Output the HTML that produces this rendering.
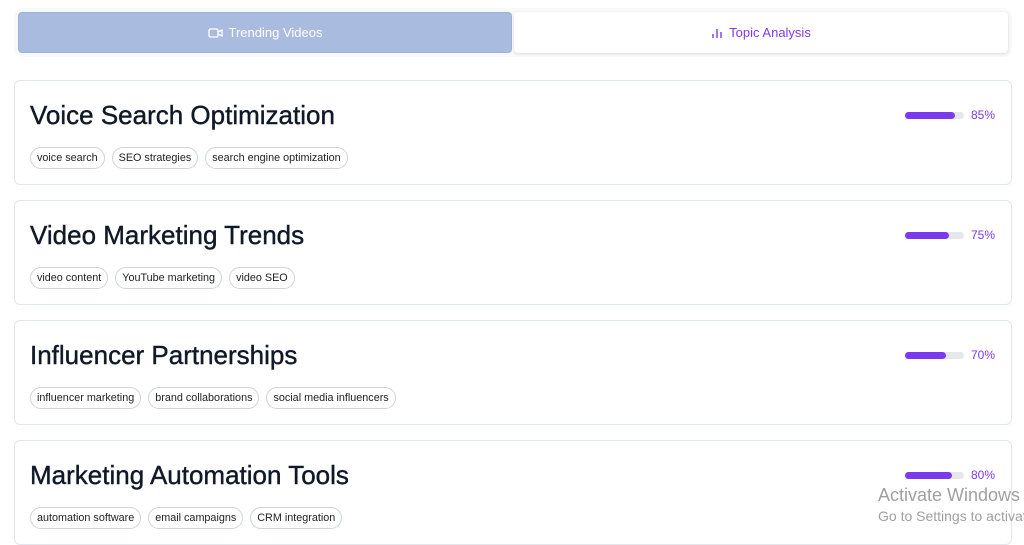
<!DOCTYPE html><html><head><style>
body{margin:0;width:1024px;height:534px;overflow:hidden;background:#fff;font-family:"Liberation Sans",sans-serif;position:relative}
.tabs{position:absolute;left:14px;top:8px;width:998px;height:49px;background:#f8f9fb;border-radius:8px}
.tab{position:absolute;top:4px;height:41px;border-radius:4px;display:flex;align-items:center;justify-content:center;font-size:13px;gap:6px}
.t1{left:4px;width:494px;background:#a9bbdf;color:#fff;border:1px solid #9fb2da;box-sizing:border-box}
.t2{left:500px;width:494px;background:#fff;color:#7c3aed;box-shadow:0 1px 3px rgba(0,0,0,.12)}
.card{position:absolute;left:14px;width:998px;height:105px;border:1px solid #e2e6ee;border-radius:6px;box-sizing:border-box}
.card h2{position:absolute;left:15px;top:19px;margin:0;font-size:26px;font-weight:normal;color:#111827;-webkit-text-stroke:.4px #111827}
.tags{position:absolute;left:15px;top:66px;display:flex;gap:7px}
.tag{border:1px solid #cfd3da;border-radius:11px;height:20px;padding:0 6px;font-size:10.8px;line-height:20px;color:#222}
.bar{position:absolute;left:890px;top:31px;width:59px;height:7px;background:#e5e7eb;border-radius:4px}
.bar i{display:block;height:7px;border-radius:4px;background:#7c3aed}
.pct{position:absolute;left:956px;top:27px;font-size:12px;color:#7c3aed}
.wm{position:absolute;left:878px;width:146px;overflow:hidden;color:#a0a0a0;white-space:nowrap}
</style></head><body>
<div class="tabs">
<div class="tab t1"><svg width="15" height="12" viewBox="0 0 15 12" fill="none" stroke="#fff" stroke-width="1.3"><rect x="1" y="2" width="9" height="8" rx="1.5"/><path d="M10 5l4-2v6l-4-2"/></svg>Trending Videos</div>
<div class="tab t2"><svg width="12" height="12" viewBox="0 0 12 12" stroke="#7c3aed" stroke-width="1.4"><path d="M2 11V7M6 11V2M10 11V5"/></svg>Topic Analysis</div>
</div>
<div class="card" style="top:80px"><h2>Voice Search Optimization</h2><div class="tags"><span class="tag">voice search</span><span class="tag">SEO strategies</span><span class="tag">search engine optimization</span></div><div class="bar"><i style="width:85%"></i></div><div class="pct">85%</div></div>
<div class="card" style="top:200px"><h2>Video Marketing Trends</h2><div class="tags"><span class="tag">video content</span><span class="tag">YouTube marketing</span><span class="tag">video SEO</span></div><div class="bar"><i style="width:75%"></i></div><div class="pct">75%</div></div>
<div class="card" style="top:320px"><h2>Influencer Partnerships</h2><div class="tags"><span class="tag">influencer marketing</span><span class="tag">brand collaborations</span><span class="tag">social media influencers</span></div><div class="bar"><i style="width:70%"></i></div><div class="pct">70%</div></div>
<div class="card" style="top:440px"><h2>Marketing Automation Tools</h2><div class="tags"><span class="tag">automation software</span><span class="tag">email campaigns</span><span class="tag">CRM integration</span></div><div class="bar"><i style="width:80%"></i></div><div class="pct">80%</div></div>
<div class="wm" style="top:485px;font-size:18px">Activate Windows</div>
<div class="wm" style="top:508px;font-size:14px">Go to Settings to activate Windows.</div>
</body></html>
